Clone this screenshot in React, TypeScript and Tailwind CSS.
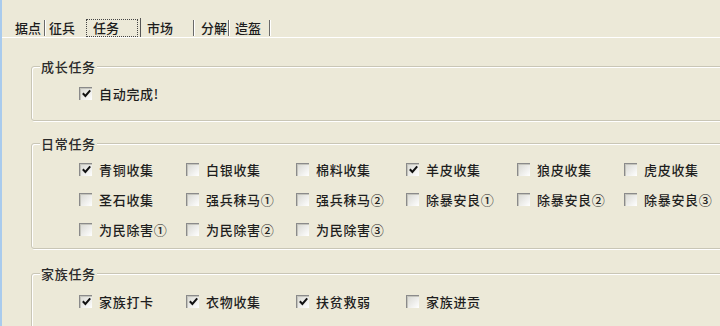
import React from "react";

type Item = { label: string; checked: boolean };

const FONT = { fontFamily: '"Noto Sans CJK SC", "Noto Sans", sans-serif' };

const daily: Item[] = [
  { label: "青铜收集", checked: true },
  { label: "白银收集", checked: false },
  { label: "棉料收集", checked: false },
  { label: "羊皮收集", checked: true },
  { label: "狼皮收集", checked: false },
  { label: "虎皮收集", checked: false },
  { label: "圣石收集", checked: false },
  { label: "强兵秣马①", checked: false },
  { label: "强兵秣马②", checked: false },
  { label: "除暴安良①", checked: false },
  { label: "除暴安良②", checked: false },
  { label: "除暴安良③", checked: false },
  { label: "为民除害①", checked: false },
  { label: "为民除害②", checked: false },
  { label: "为民除害③", checked: false },
];

const family: Item[] = [
  { label: "家族打卡", checked: true },
  { label: "衣物收集", checked: true },
  { label: "扶贫救弱", checked: true },
  { label: "家族进贡", checked: false },
];

function Box({ checked }: { checked: boolean }) {
  return (
    <span className="relative flex h-[13px] w-[13px] shrink-0 items-center justify-center border-l border-t border-[#8a8a8a] bg-gradient-to-br from-[#d8d8d2] to-white shadow-[inset_1px_1px_0_#c4c4bc]">
      {checked && (
        <svg width="9" height="9" viewBox="0 0 9 9" className="block">
          <path d="M0.8 4.2 L3.4 7 L8.2 1.4" fill="none" stroke="#111" strokeWidth="2" />
        </svg>
      )}
    </span>
  );
}

function Check({ item }: { item: Item }) {
  return (
    <div className="flex h-[30px] items-center gap-[7px]">
      <Box checked={item.checked} />
      <span className="text-[13px] font-medium leading-none tracking-[0.7px] text-[#1e1e1e]">{item.label}</span>
    </div>
  );
}

function Group({ title, pt, h, children }: { title: string; pt: string; h: string; children: React.ReactNode }) {
  return (
    <div className={`relative w-[720px] shrink-0 rounded-[3px] border border-[#c9c6b6] shadow-[inset_1px_1px_0_#fff,1px_1px_0_#fff] ${h}`}>
      <span className="absolute left-[8px] top-[-8px] bg-[#ece9d8] px-[1px] text-[13px] font-medium leading-[15px] tracking-[0.7px] text-[#2a2a2a]">
        {title}
      </span>
      <div className={`pl-[47px] ${pt}`}>{children}</div>
    </div>
  );
}

function Sep() {
  return <span className="h-[16px] w-[2px] border-l border-[#6a6a6a] border-r border-r-white" />;
}

export default function App() {
  return (
    <div className="flex h-[326px] w-[720px] overflow-hidden bg-[#ece9d8]" style={FONT}>
      <div className="w-[2px] shrink-0 bg-[#a9cbed]" />
      <div className="flex min-w-0 flex-1 flex-col overflow-hidden">
        {/* tabs */}
        <div className="flex h-[37px] shrink-0 items-center pt-[18px] text-[13px] font-medium leading-none text-[#1c1c1c]">
          <span className="ml-[13px]">据点</span>
          <span className="ml-[3px] flex"><Sep /></span>
          <span className="ml-[3px]">征兵</span>
          <span className="ml-[11px] flex h-[18px] w-[52px] items-center border border-dotted border-[#444] pl-[6px]">
            任务
          </span>
          <span className="ml-[2px] h-[20px] w-px bg-[#555]" />
          <span className="ml-[6px]">市场</span>
          <span className="ml-[20px] flex"><Sep /></span>
          <span className="ml-[6px]">分解</span>
          <span className="ml-[1px] flex"><Sep /></span>
          <span className="ml-[5px]">造盔</span>
          <span className="ml-[8px] flex"><Sep /></span>
        </div>

        {/* panel */}
        <div className="flex flex-1 flex-col border-t border-white pl-[29px] pt-[28px]">
          <Group title="成长任务" pt="pt-[11px]" h="h-[55px]">
            <Check item={{ label: "自动完成!", checked: true }} />
          </Group>

          <div className="mt-[22px] shrink-0">
            <Group title="日常任务" pt="pt-[10px]" h="h-[106px]">
              <div className="grid grid-cols-[107px_110px_110px_111px_107px_110px]">
                {daily.map((it) => (
                  <Check key={it.label} item={it} />
                ))}
              </div>
            </Group>
          </div>

          <div className="mt-[24px] shrink-0">
            <Group title="家族任务" pt="pt-[12px]" h="h-[60px]">
              <div className="grid grid-cols-[107px_110px_110px_111px]">
                {family.map((it) => (
                  <Check key={it.label} item={it} />
                ))}
              </div>
            </Group>
          </div>
        </div>
      </div>
    </div>
  );
}
